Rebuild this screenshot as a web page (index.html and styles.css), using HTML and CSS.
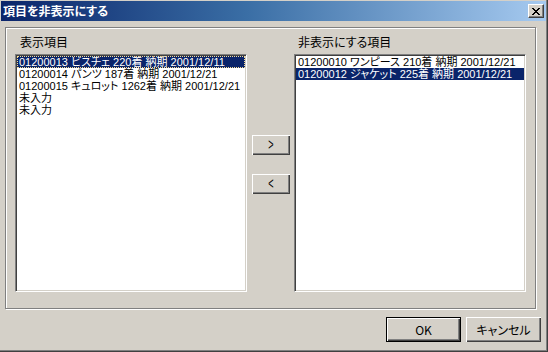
FILE: index.html
```html
<!DOCTYPE html>
<html lang="ja">
<head>
<meta charset="utf-8">
<title>項目を非表示にする</title>
<link rel="stylesheet" href="styles.css">
</head>
<body>
<div class="window">
  <div class="titlebar">
    <span class="title">項目を非表示にする</span>
    <span class="close-btn">
      <svg width="8" height="7" viewBox="0 0 8 7" shape-rendering="crispEdges"><path d="M0 0h2v1H0zM6 0h2v1H6zM1 1h2v1H1zM5 1h2v1H5zM2 2h4v1H2zM3 3h2v1H3zM2 4h4v1H2zM1 5h2v1H1zM5 5h2v1H5zM0 6h2v1H0zM6 6h2v1H6z" fill="#000"/></svg>
    </span>
  </div>
  <div class="frame">
    <div class="col">
      <div class="label">表示項目</div>
      <div class="listbox">
        <div class="item selected focused">01200013 ビスチェ 220着 納期 2001/12/11</div>
        <div class="item">01200014 パンツ 187着 納期 2001/12/21</div>
        <div class="item">01200015 キュロット 1262着 納期 2001/12/21</div>
        <div class="item">未入力</div>
        <div class="item">未入力</div>
      </div>
    </div>
    <div class="mid">
      <div class="btn move"><span class="arrow">&gt;</span></div>
      <div class="btn move"><span class="arrow">&lt;</span></div>
    </div>
    <div class="col">
      <div class="label label-right">非表示にする項目</div>
      <div class="listbox">
        <div class="item">01200010 ワンピース 210着 納期 2001/12/21</div>
        <div class="item selected">01200012 ジャケット 225着 納期 2001/12/21</div>
      </div>
    </div>
  </div>
  <div class="actions">
    <div class="btn action default">OK</div>
    <div class="btn action">キャンセル</div>
  </div>
</div>
</body>
</html>
```
FILE: styles.css
```css
html, body {
  margin: 0;
  padding: 0;
}
body {
  width: 548px;
  height: 352px;
  overflow: hidden;
  background: #d4d0c8;
  font-family: "Noto Sans CJK JP", "Noto Sans", sans-serif;
  font-size: 12px;
  color: #000;
  font-feature-settings: "palt" 1;
}
.window {
  box-sizing: border-box;
  width: 548px;
  height: 352px;
  padding: 1px 1px 0 1px;
  border-right: 1px solid #404040;
  border-bottom: 1px solid #404040;
  box-shadow: inset -1px -1px 0 #808080;
  background: #d4d0c8;
}
.titlebar {
  height: 20px;
  display: flex;
  align-items: center;
  justify-content: space-between;
  padding: 0 2px 0 2px;
  background: linear-gradient(to right, #0a246a 0%, #3a6ea5 45%, #a6caf0 100%);
  color: #fff;
}
.title {
  font-weight: bold;
  font-size: 12px;
  line-height: 14px;
}
.close-btn {
  box-sizing: border-box;
  width: 16px;
  height: 14px;
  display: flex;
  align-items: center;
  justify-content: center;
  background: #d4d0c8;
  border: 1px solid;
  border-color: #fff #404040 #404040 #fff;
  box-shadow: inset -1px -1px 0 #808080;
}
.close-btn svg {
  display: block;
}
.frame {
  box-sizing: border-box;
  width: 531px;
  height: 282px;
  margin: 6px 0 0 4px;
  border: 1px solid #808080;
  box-shadow: inset 1px 1px 0 #fff, 1px 1px 0 #fff;
  display: flex;
  padding: 7px 0 0 9px;
}
.col {
  width: 232px;
  display: flex;
  flex-direction: column;
}
.label {
  height: 14px;
  line-height: 14px;
  padding-left: 5px;
  margin-bottom: 5px;
}
.label-right {
  padding-left: 4px;
}
.listbox {
  box-sizing: border-box;
  width: 232px;
  height: 238px;
  background: #fff;
  border: 1px solid;
  border-color: #808080 #fff #fff #808080;
  box-shadow: inset 1px 1px 0 #404040, inset -1px -1px 0 #d4d0c8;
  padding: 1px 1px 0 1px;
  overflow: hidden;
}
.item {
  box-sizing: border-box;
  height: 12px;
  line-height: 12px;
  padding-left: 2px;
  white-space: nowrap;
  font-family: "Liberation Sans", "Noto Sans CJK JP", sans-serif;
  font-size: 11px;
}
.selected {
  background: #0a246a;
  color: #fff;
}
.focused {
  outline: 1px dotted #f5db95;
  outline-offset: -1px;
}
.mid {
  width: 47px;
  display: flex;
  flex-direction: column;
  align-items: center;
  padding-top: 100px;
  gap: 19px;
}
.btn {
  box-sizing: border-box;
  display: flex;
  align-items: center;
  justify-content: center;
  background: #d4d0c8;
  box-shadow: inset 1px 1px 0 #fff, inset -1px -1px 0 #404040, inset -2px -2px 0 #808080;
}
.move {
  width: 38px;
  height: 20px;
}
.arrow {
  display: block;
  font-family: "Liberation Sans", sans-serif;
  font-size: 13px;
  line-height: 13px;
  transform: scale(0.7, 1.25);
  margin-top: -1px;
}
.actions {
  display: flex;
  justify-content: flex-end;
  gap: 5px;
  margin-top: 8px;
  padding-right: 5px;
}
.action {
  width: 75px;
  height: 25px;
  line-height: 14px;
}
.default {
  border: 1px solid #000;
}
```
